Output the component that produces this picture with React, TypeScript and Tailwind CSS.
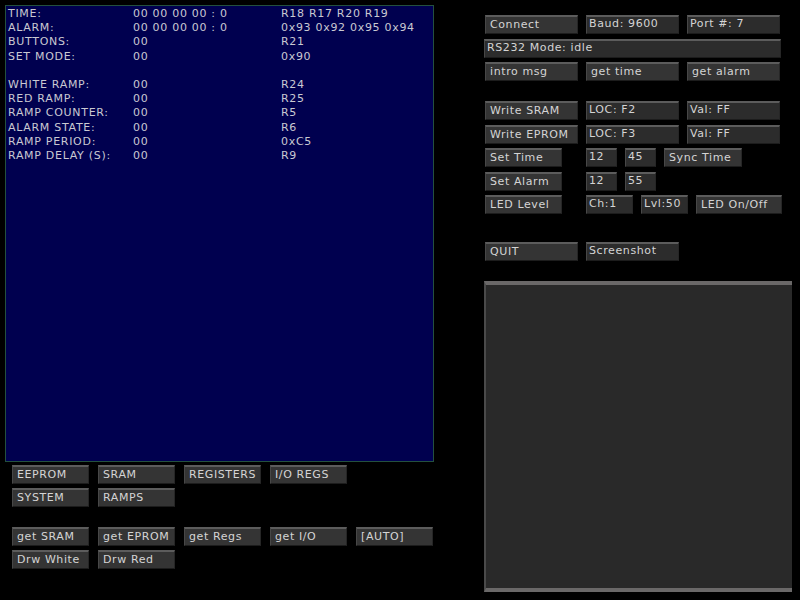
import React from 'react'

const font = { fontFamily: '"DejaVu Sans", Verdana, sans-serif' }

interface BtnProps {
  label: string
  w: string
  field?: boolean
}

const Btn = ({ label, w, field }: BtnProps) => (
  <div
    className={`${w} h-[19px] shrink-0 overflow-hidden whitespace-nowrap border-t-2 border-l border-r border-b border-t-[#5c5c5c] border-l-[#474747] border-r-[#262626] border-b-[#1c1c1c] text-[11px] tracking-[0.6px] text-[#d4d4d4] ${
      field ? 'bg-[#2c2c2c] pl-[2px] leading-[13px]' : 'bg-[#343434] pl-[4px] leading-[16px]'
    }`}
  >
    {label}
  </div>
)

const rows: [string, string, string][] = [
  ['TIME:', '00 00 00 00 : 0', 'R18 R17 R20 R19'],
  ['ALARM:', '00 00 00 00 : 0', '0x93 0x92 0x95 0x94'],
  ['BUTTONS:', '00', 'R21'],
  ['SET MODE:', '00', '0x90'],
  ['', '', ''],
  ['WHITE RAMP:', '00', 'R24'],
  ['RED RAMP:', '00', 'R25'],
  ['RAMP COUNTER:', '00', 'R5'],
  ['ALARM STATE:', '00', 'R6'],
  ['RAMP PERIOD:', '00', '0xC5'],
  ['RAMP DELAY (S):', '00', 'R9'],
]

const App = () => {
  return (
    <div className="flex h-[600px] w-[800px] overflow-hidden bg-black" style={font}>
      {/* left side */}
      <div className="flex w-[479px] flex-col pl-[5px] pt-[5px]">
        <div className="h-[457px] w-[429px] border border-[#24503e] bg-[#00004f] pl-[2px] pt-[1px]">
          <div className="grid grid-cols-[125px_148px_1fr] text-[11px] leading-[14.2px] tracking-[0.7px] text-[#c9c9d2]">
            {rows.map((r, i) => (
              <React.Fragment key={i}>
                <div className="h-[14.2px] whitespace-nowrap">{r[0]}</div>
                <div className="h-[14.2px] whitespace-nowrap">{r[1]}</div>
                <div className="h-[14.2px] whitespace-nowrap">{r[2]}</div>
              </React.Fragment>
            ))}
          </div>
        </div>

        <div className="ml-[7px] mt-[3px] flex flex-col gap-[4px]">
          <div className="flex gap-[9px]">
            <Btn label="EEPROM" w="w-[77px]" />
            <Btn label="SRAM" w="w-[77px]" />
            <Btn label="REGISTERS" w="w-[77px]" />
            <Btn label="I/O REGS" w="w-[77px]" />
          </div>
          <div className="flex gap-[9px]">
            <Btn label="SYSTEM" w="w-[77px]" />
            <Btn label="RAMPS" w="w-[77px]" />
          </div>
          <div className="mt-[16px] flex gap-[9px]">
            <Btn label="get SRAM" w="w-[77px]" />
            <Btn label="get EPROM" w="w-[77px]" />
            <Btn label="get Regs" w="w-[77px]" />
            <Btn label="get I/O" w="w-[77px]" />
            <Btn label="[AUTO]" w="w-[77px]" />
          </div>
          <div className="flex gap-[9px]">
            <Btn label="Drw White" w="w-[77px]" />
            <Btn label="Drw Red" w="w-[77px]" />
          </div>
        </div>
      </div>

      {/* right side */}
      <div className="flex flex-col pl-[5px] pt-[15px]">
        <div className="flex gap-[8px] pl-[1px]">
          <Btn label="Connect" w="w-[93px]" />
          <Btn label="Baud: 9600" w="w-[93px]" field />
          <Btn label="Port #: 7" w="w-[93px]" field />
        </div>
        <div className="mt-[5px] flex">
          <Btn label="RS232 Mode: idle" w="w-[297px]" field />
        </div>
        <div className="mt-[4px] flex gap-[8px] pl-[1px]">
          <Btn label="intro msg" w="w-[93px]" />
          <Btn label="get time" w="w-[93px]" />
          <Btn label="get alarm" w="w-[93px]" />
        </div>

        <div className="mt-[20px] flex gap-[8px] pl-[1px]">
          <Btn label="Write SRAM" w="w-[93px]" />
          <Btn label="LOC: F2" w="w-[93px]" field />
          <Btn label="Val: FF" w="w-[93px]" field />
        </div>
        <div className="mt-[5px] flex gap-[8px] pl-[1px]">
          <Btn label="Write EPROM" w="w-[93px]" />
          <Btn label="LOC: F3" w="w-[93px]" field />
          <Btn label="Val: FF" w="w-[93px]" field />
        </div>
        <div className="mt-[4px] flex pl-[1px]">
          <Btn label="Set Time" w="w-[77px]" />
          <div className="ml-[24px] flex gap-[8px]">
            <Btn label="12" w="w-[31px]" field />
            <Btn label="45" w="w-[31px]" field />
            <Btn label="Sync Time" w="w-[78px]" />
          </div>
        </div>
        <div className="mt-[5px] flex pl-[1px]">
          <Btn label="Set Alarm" w="w-[77px]" />
          <div className="ml-[24px] flex gap-[8px]">
            <Btn label="12" w="w-[31px]" field />
            <Btn label="55" w="w-[31px]" field />
          </div>
        </div>
        <div className="mt-[4px] flex pl-[1px]">
          <Btn label="LED Level" w="w-[77px]" />
          <div className="ml-[24px] flex gap-[8px]">
            <Btn label="Ch:1" w="w-[47px]" field />
            <Btn label="Lvl:50" w="w-[47px]" field />
            <Btn label="LED On/Off" w="w-[86px]" />
          </div>
        </div>

        <div className="mt-[28px] flex gap-[8px] pl-[1px]">
          <Btn label="QUIT" w="w-[93px]" />
          <Btn label="Screenshot" w="w-[93px]" field />
        </div>

        <div className="mt-[20px] h-[311px] w-[308px] border-t-4 border-b-4 border-l-2 border-t-[#6a6868] border-b-[#6a6868] border-l-[#4a4a4a] bg-[#292929]" />
      </div>
    </div>
  )
}

export default App
